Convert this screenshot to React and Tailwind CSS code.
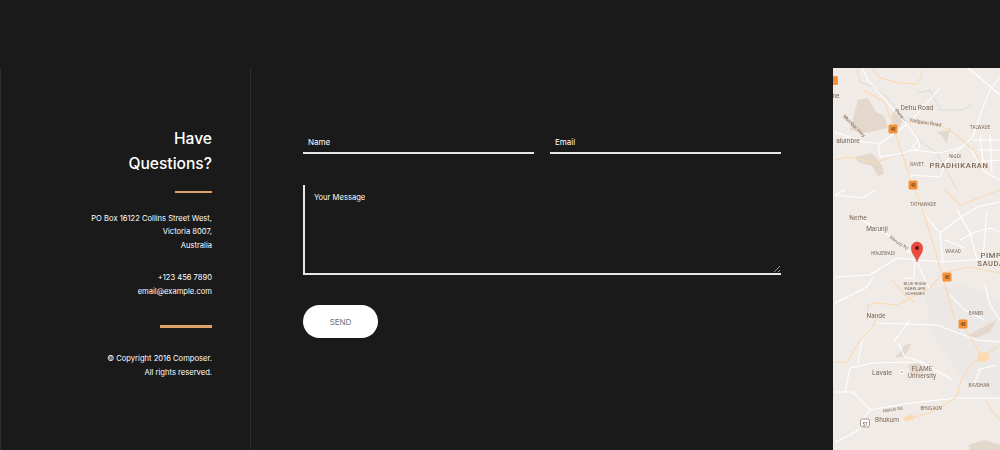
import React from "react";

const whiteRoads = [
  "M968 68L985 82L1000 95",
  "M1000 77L990 90L980 115L973 137",
  "M973 140L1000 140M978 150L1000 150M975 162L1000 160",
  "M980 135L984 170M990 135L992 172M970 148L985 172L1000 180",
  "M940 88L925 105L912 120",
  "M907 125L918 140L913 146L916 151L920 146L918 140",
  "M880 157L903 153L912 150L940 153L962 147L973 137",
  "M878 145L903 127L907 125",
  "M835 132L863 142L878 143L880 157",
  "M962 147L947 160L940 177L910 175",
  "M862 68L868 80L885 100L907 125",
  "M835 277L870 275L897 258L917 260L943 262L1000 258",
  "M917 262L930 290M915 262L914 278L903 278",
  "M853 215L897 240L910 253",
  "M940 233L957 220L977 207L1000 202",
  "M957 210L970 233L977 260",
  "M960 240L975 232L990 228L1000 232",
  "M987 210L983 257M945 240L965 248",
  "M835 303L867 287L873 277",
  "M835 195L863 198L875 190M845 190L835 195",
  "M925 215L940 233L943 262",
  "M910 175L925 215",
  "M845 392L850 368L873 363L907 362L923 363L953 380",
  "M835 392L853 392L870 410L910 403L957 398L1000 398",
  "M835 442L850 435L863 427",
  "M870 410L862 420",
  "M893 343L910 320M898 343L905 357L923 362",
  "M858 363L862 340L875 327",
  "M877 323L937 325L977 340L1000 342",
  "M977 370L997 365M973 387L980 370",
  "M985 285L990 305L1000 320",
  "M950 295L965 310L985 320",
];

const orangeRoads = [
  "M872 68L880 78L900 83L918 84L923 70",
  "M863 90L885 102L892 123L910 177L922 207L940 267L955 320",
  "M907 122L940 125L957 135L973 150L985 170",
  "M835 160L850 157L875 163L888 158",
  "M867 320L868 305L875 303L897 305L930 288L943 273L970 267L1000 273",
  "M835 362L847 362L858 343L873 328L875 320",
  "M910 418L930 413L957 397L962 377L973 363L983 357L997 347",
  "M963 326L975 345L983 357",
  "M892 280L905 295L915 302",
  "M985 400L995 415L1000 420",
  "M1000 190L960 205L945 190",
];

const tanAreas = [
  "M850 130L858 100L868 98L876 112L884 116L888 128L870 132L862 133Z",
  "M892 113L898 110L904 120L898 128L892 122Z",
  "M855 157L872 153L882 165L884 174L878 176L872 166L858 162Z",
  "M937 132L947 131L951 127L948 137L947 144L942 136Z",
  "M908 365L920 362L923 372L912 376Z",
  "M895 358L905 345L912 343L905 356Z",
  "M968 335L985 326L997 320L990 332L975 338Z",
  "M968 445L985 440L1000 445L1000 450L970 450Z",
];

// label, x, y, size, rotation
const labels = [
  ["Dehu Road", 917, 110, 6.8, 0],
  ["PRADHIKARAN", 959, 168, 7.6, 0, "font-medium tracking-[0.6px]"],
  ["RAVET", 917, 166, 4.5, 0],
  ["NIGDI", 955, 158, 4.5, 0],
  ["TALWADE", 980, 129, 4.5, 0],
  ["Mumbai Hwy", 853, 127, 5, 45],
  ["Pune -", 899, 116, 5, 50],
  ["Vadgaon Road", 925, 124, 5, 10],
  ["alumbre", 848, 143, 6.5, 0],
  ["ne", 836, 98, 6.5, 0],
  ["TATHAWADE", 923, 206, 4.5, 0],
  ["Nerhe", 858, 220, 6.5, 0],
  ["Marunji", 877, 231, 6.5, 0],
  ["Marunji Rd", 898, 244, 4.5, 35],
  ["HINJEWADI", 883, 255, 4.5, 0],
  ["WAKAD", 953, 253, 4.5, 0],
  ["PIMP", 991, 258, 7.6, 0, "font-medium tracking-[0.6px]"],
  ["SAUDA", 991, 266, 7.6, 0, "font-medium tracking-[0.6px]"],
  ["BLUE RIDGE", 915, 285, 4.3, 0],
  ["PARKLAPE", 915, 290, 4.3, 0],
  ["SCHEMES", 915, 295, 4.3, 0],
  ["BANER", 976, 315, 4.5, 0],
  ["Nande", 876, 318, 6.5, 0],
  ["Lavale", 882, 375, 7, 0],
  ["FLAME", 922, 371, 6.5, 0],
  ["University", 922, 378, 6.5, 0],
  ["BAVDHAN", 979, 387, 4.5, 0],
  ["BHUGAON", 931, 410, 4.5, 0],
  ["Mulshi Rd", 893, 411, 4.5, -8],
  ["Bhukum", 887, 422, 6.5, 0],
];

const shields = [
  [893, 129],
  [913, 185],
  [947, 277],
  [963, 324],
];

const MapPicture = () => (
  <svg viewBox="833 68 167 382" className="block h-full w-full blur-[0.25px]">
    <rect x="833" y="68" width="167" height="382" fill="#f0ebe7" />
    <path d="M925 290L965 285L1000 300L1000 400L960 375L930 330Z" fill="#ebe8e5" />
    {tanAreas.map((d) => (
      <path key={d} d={d} fill="#e4d8cd" />
    ))}
    <ellipse cx="983" cy="357" rx="6" ry="5" fill="#fcd9b0" />
    <path d="M903 418L912 414L914 420L905 421Z" fill="#fcd9b0" />
    <path d="M857 70L860 82L873 87L887 97L907 122M918 93L930 90L940 110L963 110L973 103M918 140L937 153L957 190" fill="none" stroke="#d7d7d4" strokeWidth="0.8" />
    {whiteRoads.map((d) => (
      <path key={d} d={d} fill="none" stroke="#ffffff" strokeWidth="1.1" />
    ))}
    {orangeRoads.map((d) => (
      <path key={d} d={d} fill="none" stroke="#fcd9b0" strokeWidth="1.1" />
    ))}
    {labels.map(([text, x, y, size, rot, extra]) => (
      <text
        key={text}
        x={x}
        y={y}
        fontSize={size}
        textAnchor="middle"
        fill="#7d6859"
        transform={rot ? `rotate(${rot} ${x} ${y})` : undefined}
        className={`font-['Roboto',sans-serif] ${extra || ""}`}
      >
        {text}
      </text>
    ))}
    <rect x="830" y="76" width="8" height="9" rx="1.5" fill="#f3913a" />
    {shields.map(([x, y]) => (
      <g key={`${x}-${y}`}>
        <rect x={x - 4.5} y={y - 4.5} width="9" height="9" rx="1.5" fill="#f3913a" />
        <text x={x} y={y + 1.6} fontSize="4.5" textAnchor="middle" fill="#5c3310" className="font-['Roboto',sans-serif]">
          48
        </text>
      </g>
    ))}
    <rect x="860.5" y="419" width="9" height="8" rx="2" fill="#ffffff" stroke="#6b5a4c" strokeWidth="0.6" />
    <text x="865" y="425.5" fontSize="4.5" textAnchor="middle" fill="#5c4a3d" className="font-['Roboto',sans-serif]">
      57
    </text>
    <circle cx="902" cy="372" r="2.5" fill="#ffffff" />
    <path d="M900.8 372H903.2" stroke="#7d6859" strokeWidth="0.8" />
    <path
      d="M917 262C915.5 256 911.3 254 911.3 248C911.3 244.6 913.8 242 917 242C920.2 242 922.7 244.6 922.7 248C922.7 254 918.5 256 917 262Z"
      fill="#ea4a3f"
      stroke="#c9362c"
      strokeWidth="0.4"
    />
    <circle cx="917" cy="248" r="1.9" fill="#5a1410" />
  </svg>
);

export default function App() {
  return (
    <div className="h-[450px] w-[1000px] overflow-hidden bg-[#1a1a1a] font-['Inter',sans-serif] text-white">
      <div className="h-[68px]" />
      <div className="flex h-[382px]">
        <aside className="flex w-[251px] flex-col items-end border-x border-[#2c2c2c] pr-[38px] pt-[59px] text-right">
          <h2 className="text-[15.6px] font-medium leading-[24.5px]">
            Have
            <br />
            Questions?
          </h2>
          <div className="mt-[14.5px] h-[2px] w-[37px] bg-[#dfa267]" />
          <p className="mt-[19px] text-[7.6px] leading-[13.8px] text-white">
            PO Box 16122 Collins Street West,
            <br />
            Victoria 8007,
            <br />
            Australia
          </p>
          <p className="mt-[18px] text-[7.6px] leading-[13.8px] text-white">
            +123 456 7890
            <br />
            email@example.com
          </p>
          <div className="mt-[27px] h-[3px] w-[52px] bg-[#dfa267]" />
          <p className="mt-[24px] text-[7.6px] leading-[13.8px] text-white">
            © Copyright 2016 Composer.
            <br />
            All rights reserved.
          </p>
        </aside>

        <main className="w-[582px] px-[52px] pt-[62px]">
          <div className="flex gap-[16px]">
            <input
              placeholder="Name"
              className="h-[24px] w-[231px] border-b-2 border-[#e6e6e6] bg-transparent px-[5px] pt-[2px] text-[8px] outline-none placeholder:text-white"
            />
            <input
              placeholder="Email"
              className="h-[24px] w-[231px] border-b-2 border-[#e6e6e6] bg-transparent px-[5px] pt-[2px] text-[8px] outline-none placeholder:text-white"
            />
          </div>
          <textarea
            placeholder="Your Message"
            className="mt-[31px] block h-[90px] w-[478px] border-b-2 border-l-2 border-[#e6e6e6] bg-transparent px-[9px] py-[7px] text-[7.6px] leading-[12px] outline-none placeholder:text-white"
          />
          <button className="mt-[30px] block h-[33px] w-[75px] rounded-full bg-white pt-[1px] text-[8px] text-[#707070]">
            SEND
          </button>
        </main>

        <div className="w-[167px]">
          <MapPicture />
        </div>
      </div>
    </div>
  );
}
